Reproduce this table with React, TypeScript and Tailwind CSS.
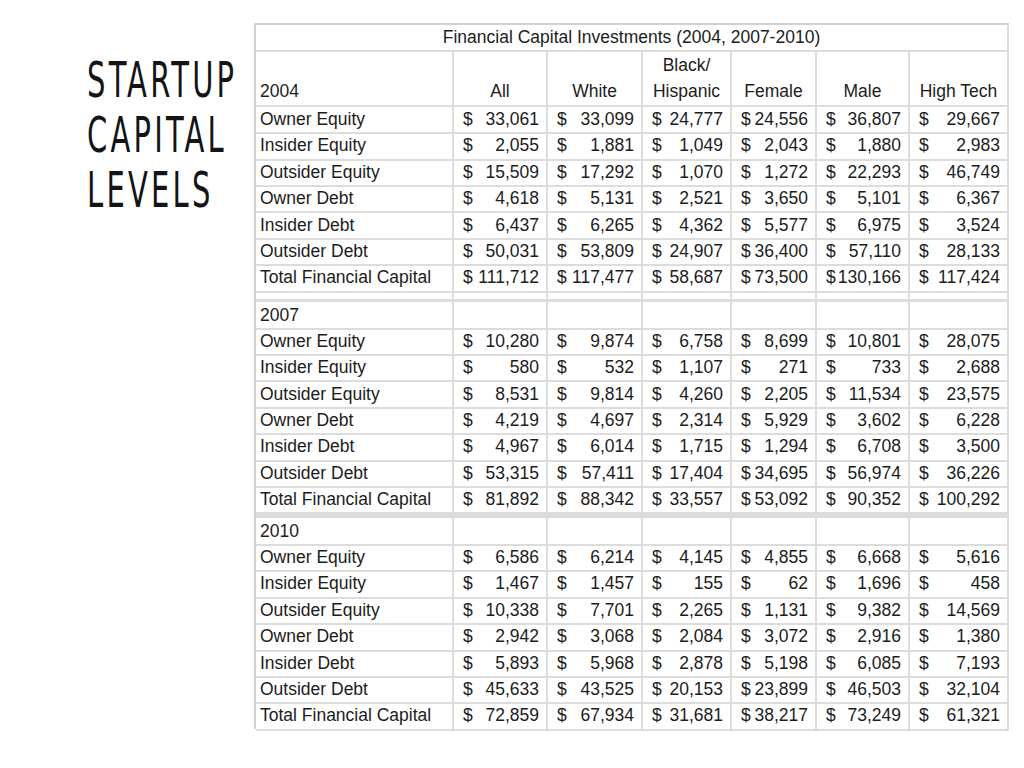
import React from 'react';

type Row = { label: string; values: string[] };

interface Section {
  year: string;
  rows: Row[];
}

const sections: Section[] = [
  {
    year: '2004',
    rows: [
      { label: 'Owner Equity', values: ['33,061', '33,099', '24,777', '24,556', '36,807', '29,667'] },
      { label: 'Insider Equity', values: ['2,055', '1,881', '1,049', '2,043', '1,880', '2,983'] },
      { label: 'Outsider Equity', values: ['15,509', '17,292', '1,070', '1,272', '22,293', '46,749'] },
      { label: 'Owner Debt', values: ['4,618', '5,131', '2,521', '3,650', '5,101', '6,367'] },
      { label: 'Insider Debt', values: ['6,437', '6,265', '4,362', '5,577', '6,975', '3,524'] },
      { label: 'Outsider Debt', values: ['50,031', '53,809', '24,907', '36,400', '57,110', '28,133'] },
      { label: 'Total Financial Capital', values: ['111,712', '117,477', '58,687', '73,500', '130,166', '117,424'] },
    ],
  },
  {
    year: '2007',
    rows: [
      { label: 'Owner Equity', values: ['10,280', '9,874', '6,758', '8,699', '10,801', '28,075'] },
      { label: 'Insider Equity', values: ['580', '532', '1,107', '271', '733', '2,688'] },
      { label: 'Outsider Equity', values: ['8,531', '9,814', '4,260', '2,205', '11,534', '23,575'] },
      { label: 'Owner Debt', values: ['4,219', '4,697', '2,314', '5,929', '3,602', '6,228'] },
      { label: 'Insider Debt', values: ['4,967', '6,014', '1,715', '1,294', '6,708', '3,500'] },
      { label: 'Outsider Debt', values: ['53,315', '57,411', '17,404', '34,695', '56,974', '36,226'] },
      { label: 'Total Financial Capital', values: ['81,892', '88,342', '33,557', '53,092', '90,352', '100,292'] },
    ],
  },
  {
    year: '2010',
    rows: [
      { label: 'Owner Equity', values: ['6,586', '6,214', '4,145', '4,855', '6,668', '5,616'] },
      { label: 'Insider Equity', values: ['1,467', '1,457', '155', '62', '1,696', '458'] },
      { label: 'Outsider Equity', values: ['10,338', '7,701', '2,265', '1,131', '9,382', '14,569'] },
      { label: 'Owner Debt', values: ['2,942', '3,068', '2,084', '3,072', '2,916', '1,380'] },
      { label: 'Insider Debt', values: ['5,893', '5,968', '2,878', '5,198', '6,085', '7,193'] },
      { label: 'Outsider Debt', values: ['45,633', '43,525', '20,153', '23,899', '46,503', '32,104'] },
      { label: 'Total Financial Capital', values: ['72,859', '67,934', '31,681', '38,217', '73,249', '61,321'] },
    ],
  },
];

const grid = 'grid grid-cols-[198px_94px_95px_89px_85px_93px_99px]';
const cell = 'border-r-2 border-b-2 border-[#dcdcdc]';

const Money: React.FC<{ v: string }> = ({ v }) => (
  <div className={`${cell} flex items-center justify-between pl-[9px] pr-[7px]`}>
    <span>$</span>
    <span>{v}</span>
  </div>
);

const EmptyRow: React.FC<{ h: string; last?: string }> = ({ h, last }) => (
  <div className={`${grid} ${h}`}>
    {[0, 1, 2, 3, 4, 5, 6].map((i) => (
      <div key={i} className={`border-r-2 border-[#dcdcdc] ${last ?? 'border-b-2'}`} />
    ))}
  </div>
);

export default function App() {
  return (
    <div className="flex h-[768px] w-[1024px] bg-white">
      <div className="flex w-[254px] items-start pl-[62px] pt-[53px]">
        <div className="mt-[39px] h-[101px] w-[2px] bg-[#35a9dc]" />
        <div
          className="ml-[25px] origin-left scale-x-[0.645] text-[50px] leading-[55px] tracking-[0.1em] text-[#141414] whitespace-nowrap"
          style={{ fontFamily: '"DejaVu Sans Condensed", "DejaVu Sans", sans-serif' }}
        >
          <div>STARTUP</div>
          <div>CAPITAL</div>
          <div>LEVELS</div>
        </div>
      </div>

      <div className="pt-[23px]">
        <div
          className="w-[755px] border-l-2 border-t-2 border-[#d2d2d2] text-[17.5px] text-[#1c1c1c]"
          style={{ fontFamily: '"Liberation Sans", Arial, sans-serif' }}
        >
          <div className={`${cell} flex h-[27px] items-center justify-center`}>
            Financial Capital Investments (2004, 2007-2010)
          </div>
          <div className={`${grid} h-[54px]`}>
            <div className={`${cell} flex items-end pb-[1px] pl-[4px]`}>2004</div>
            {['All', 'White', 'Black/ Hispanic', 'Female', 'Male', 'High Tech'].map((h) => (
              <div key={h} className={`${cell} flex flex-col items-center justify-end pb-[1px] leading-[26px]`}>
                {h === 'Black/ Hispanic' ? (
                  <>
                    <span>Black/</span>
                    <span>Hispanic</span>
                  </>
                ) : (
                  <span>{h}</span>
                )}
              </div>
            ))}
          </div>

          {sections.map((s, si) => (
            <React.Fragment key={s.year}>
              {si > 0 && (
                <div className={`${grid} h-[26px]`}>
                  <div className={`${cell} flex items-center pl-[4px]`}>{s.year}</div>
                  {[0, 1, 2, 3, 4, 5].map((i) => (
                    <div key={i} className={cell} />
                  ))}
                </div>
              )}
              {s.rows.map((r, ri) => {
                const isTotal = ri === s.rows.length - 1;
                let h = 'h-[26.4px]';
                if (isTotal && si === 1) h = 'h-[32px] border-b-[4px] border-[#dcdcdc]';
                return (
                  <div key={r.label} className={`${grid} ${h}`}>
                    <div className={`${cell} flex items-center pl-[4px] whitespace-nowrap`}>{r.label}</div>
                    {r.values.map((v, vi) => (
                      <Money key={vi} v={v} />
                    ))}
                  </div>
                );
              })}
              {si === 0 && <EmptyRow h="h-[11px]" last="border-b-[3px]" />}
            </React.Fragment>
          ))}
        </div>
      </div>
    </div>
  );
}
